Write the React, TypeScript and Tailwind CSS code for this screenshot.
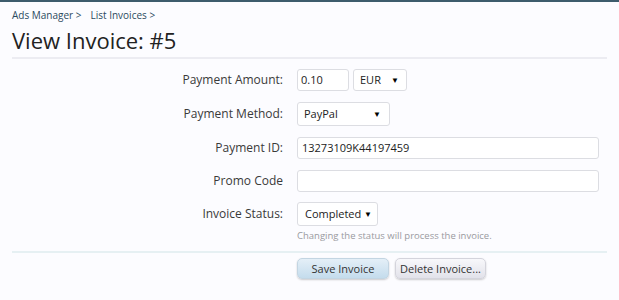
const fields = [
  { label: "Payment ID:", value: "13273109K44197459" },
  { label: "Promo Code", value: "" },
] as const;

function Caret() {
  return <span className="text-[8px] leading-none text-black">▼</span>;
}

function Label({ children }: { children: string }) {
  return (
    <div className="w-[285px] shrink-0 pr-[14px] text-right text-[12px] text-[#3a3a3a]">
      {children}
    </div>
  );
}

export default function App() {
  return (
    <div
      className="min-h-[300px] w-[619px] border-t-2 border-[#3d5c6c] bg-[#fcfcff] text-[#222]"
      style={{ fontFamily: '"Open Sans", "Noto Sans", sans-serif' }}
    >
      <div className="px-3">
        <nav className="flex gap-[9px] pt-[6px] text-[10px] text-[#2b4a5e]">
          <span>Ads Manager &gt;</span>
          <span>List Invoices &gt;</span>
        </nav>
        <h1 className="mt-[2px] text-[22px] leading-[30px] text-[#222]">View Invoice: #5</h1>
        <div className="mt-[2px] h-[2px] bg-[#ececf2]" />

        <div className="flex flex-col">
          <div className="mt-[10px] flex items-center">
            <Label>Payment Amount:</Label>
            <div className="flex gap-[4px]">
              <div className="flex h-[22px] w-[52px] items-center rounded-[3px] border border-[#dcdde2] bg-white px-[3px] text-[11px]">
                0.10
              </div>
              <div className="flex h-[22px] w-[54px] items-center justify-between rounded-[3px] border border-[#dcdde2] bg-white pl-[6px] pr-[7px] text-[11px]">
                <span>EUR</span>
                <Caret />
              </div>
            </div>
          </div>

          <div className="mt-[11px] flex items-center">
            <Label>Payment Method:</Label>
            <div className="flex h-[24px] w-[93px] items-center justify-between rounded-[3px] border border-[#dcdde2] bg-white pl-[6px] pr-[8px] text-[11px]">
              <span>PayPal</span>
              <Caret />
            </div>
          </div>

          {fields.map((f) => (
            <div key={f.label} className="mt-[11px] flex items-center">
              <Label>{f.label}</Label>
              <div className="flex h-[22px] w-[302px] items-center rounded-[3px] border border-[#dcdde2] bg-white px-[4px] text-[11px]">
                {f.value}
              </div>
            </div>
          ))}

          <div className="mt-[10px] flex items-center">
            <Label>Invoice Status:</Label>
            <div className="flex h-[24px] w-[81px] items-center justify-between rounded-[3px] border border-[#dcdde2] bg-white pl-[7px] pr-[5px] text-[11px]">
              <span>Completed</span>
              <Caret />
            </div>
          </div>
          <div className="ml-[285px] mt-[3px] text-[9.5px] text-[#9a9aa0]">
            Changing the status will process the invoice.
          </div>
        </div>

        <div className="mt-[8px] h-[2px] bg-[#e6f0f3]" />

        <div className="ml-[285px] mt-[5px] flex gap-[6px]">
          <button className="h-[21px] w-[92px] rounded-[5px] border border-[#c3d5e2] bg-gradient-to-b from-[#e4eff7] to-[#c4dced] text-[11px] text-[#333] shadow-[0_1px_2px_rgba(0,0,0,0.2)]">
            Save Invoice
          </button>
          <button className="h-[21px] w-[91px] rounded-[5px] border border-[#d4d4dc] bg-gradient-to-b from-[#f8f8fb] to-[#e2e2ea] text-[11px] text-[#333] shadow-[0_1px_2px_rgba(0,0,0,0.2)]">
            Delete Invoice...
          </button>
        </div>
      </div>
    </div>
  );
}
